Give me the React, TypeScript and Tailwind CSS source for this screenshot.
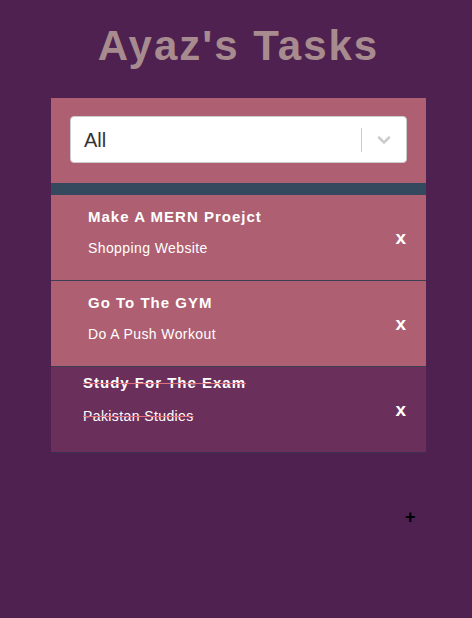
import { ChevronDown } from "lucide-react";

const tasks = [
  { title: "Make A MERN Proejct", desc: "Shopping Website", done: false },
  { title: "Go To The GYM", desc: "Do A Push Workout", done: false },
  { title: "Study For The Exam", desc: "Pakistan Studies", done: true },
];

export default function App() {
  return (
    <div className="min-h-[618px] bg-[#4e2150] font-['Liberation_Sans',Arial,sans-serif] relative">
      <h1 className="pt-[22px] text-center pl-[5px] text-[42px] font-bold tracking-[2px] leading-[48px] text-[#a88b8f]">
        Ayaz's Tasks
      </h1>

      <div className="ml-[51px] mt-[28px] w-[375px] bg-[#ae5f72]">
        <div className="px-[19px] pt-[18px] pb-[20px]">
          <div className="flex h-[47px] items-center rounded-[4px] border border-[#cccccc] bg-white">
            <span className="flex-1 pl-[13px] text-[20px] text-[#333333]">All</span>
            <span className="h-[24px] w-px bg-[#cccccc]" />
            <span className="flex w-[44px] justify-center text-[#cccccc]">
              <ChevronDown size={20} strokeWidth={3} />
            </span>
          </div>
        </div>
        <div className="h-[12px] bg-[#34495e]" />

        {tasks.map((t, i) => (
          <TaskRow key={i} {...t} />
        ))}
      </div>

      <div className="absolute left-[405px] top-[508px] text-[18px] font-bold leading-none text-black">+</div>
    </div>
  );
}

function TaskRow({ title, desc, done }: { title: string; desc: string; done: boolean }) {
  return (
    <div
      className={
        done
          ? "flex h-[86px] items-center border-b border-[#3a2f4f] bg-[#6b2f5b] pl-[32px] pr-[20px]"
          : "flex h-[86px] items-center border-b border-[#3a3f55] pl-[37px] pr-[20px]"
      }
    >
      <div className={done ? "flex-1 self-start pt-[7px] text-white" : "flex-1 self-start pt-[13px] text-white"}>
        <div
          className={
            done
              ? "text-[15px] leading-[18px] font-bold tracking-[1px] line-through decoration-[#e0707a]"
              : "text-[15px] leading-[18px] font-bold tracking-[1px]"
          }
        >
          {title}
        </div>
        <div
          className={
            done
              ? "mt-[16px] text-[14px] leading-[16px] tracking-[0.4px] line-through decoration-[#e0707a]"
              : "mt-[14px] text-[14px] leading-[16px] tracking-[0.4px]"
          }
        >
          {desc}
        </div>
      </div>
      <span className="text-[19px] font-bold leading-none text-white">x</span>
    </div>
  );
}
